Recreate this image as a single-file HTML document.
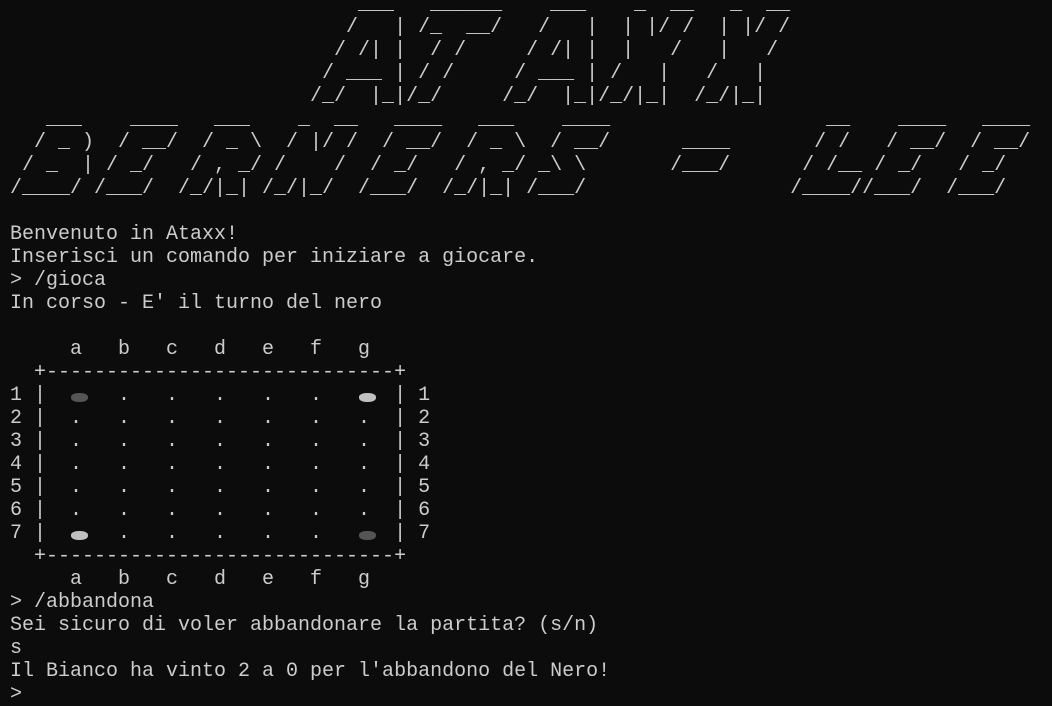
<!DOCTYPE html>
<html><head><meta charset="utf-8"><style>
html,body{margin:0;padding:0;background:#0c0c0c;width:1052px;height:704px;overflow:hidden}
pre{position:absolute;left:10px;top:-7px;margin:0;font-family:"Liberation Mono",monospace;font-size:20px;line-height:23px;color:#cccccc;white-space:pre}
.p{display:inline-block;width:12px;height:10px;position:relative}
.p::after{content:"";position:absolute;left:1px;top:3px;width:17px;height:9px;border-radius:45%}
.b::after{background:#555}
.w::after{background:#c0c0c0}
</style></head><body>
<pre>                             ___   ______    ___    _  __   _  __
                            /   | /_  __/   /   |  | |/ /  | |/ /
                           / /| |  / /     / /| |  |   /   |   / 
                          / ___ | / /     / ___ | /   |   /   |  
                         /_/  |_|/_/     /_/  |_|/_/|_|  /_/|_|  
   ___    ____   ___    _  __   ____   ___    ____                  __    ____   ____
  / _ )  / __/  / _ \  / |/ /  / __/  / _ \  / __/      ____       / /   / __/  / __/
 / _  | / _/   / , _/ /    /  / _/   / , _/ _\ \       /___/      / /__ / _/   / _/  
/____/ /___/  /_/|_| /_/|_/  /___/  /_/|_| /___/                 /____//___/  /___/  

Benvenuto in Ataxx!
Inserisci un comando per iniziare a giocare.
&gt; /gioca
In corso - E' il turno del nero

     a   b   c   d   e   f   g
  +-----------------------------+
1 |  <span class="p b"></span>   .   .   .   .   .   <span class="p w"></span>  | 1
2 |  .   .   .   .   .   .   .  | 2
3 |  .   .   .   .   .   .   .  | 3
4 |  .   .   .   .   .   .   .  | 4
5 |  .   .   .   .   .   .   .  | 5
6 |  .   .   .   .   .   .   .  | 6
7 |  <span class="p w"></span>   .   .   .   .   .   <span class="p b"></span>  | 7
  +-----------------------------+
     a   b   c   d   e   f   g
&gt; /abbandona
Sei sicuro di voler abbandonare la partita? (s/n)
s
Il Bianco ha vinto 2 a 0 per l'abbandono del Nero!
&gt;</pre>
</body></html>
